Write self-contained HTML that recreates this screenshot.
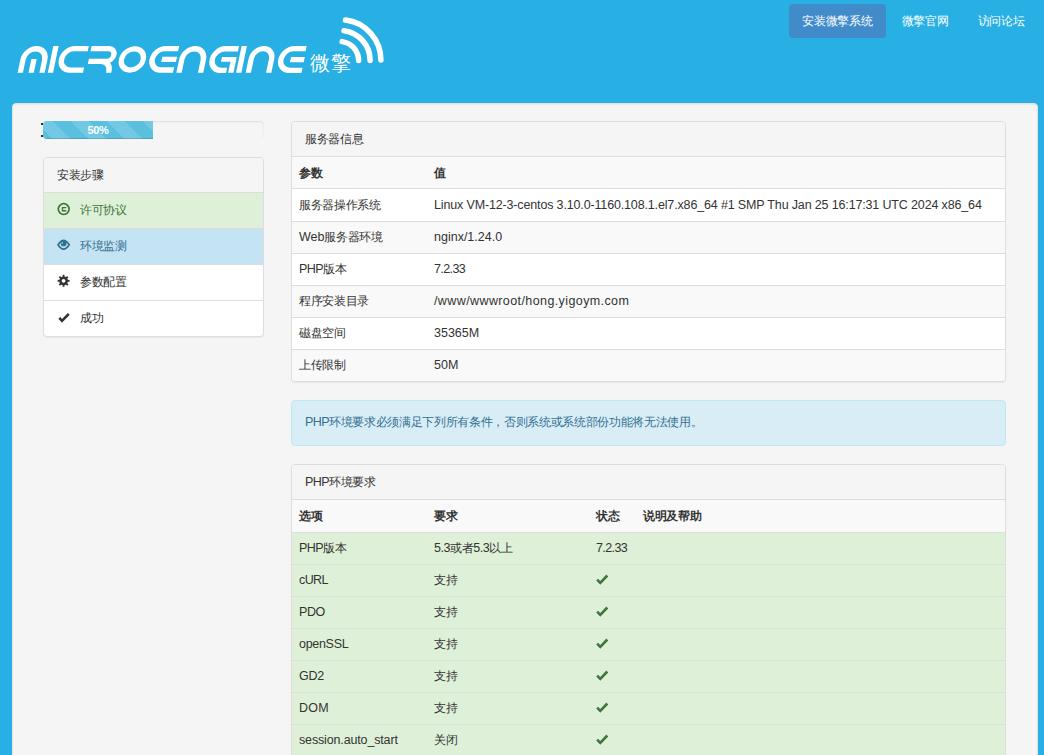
<!DOCTYPE html>
<html><head><meta charset="utf-8">
<style>
*{box-sizing:border-box;}
html,body{margin:0;padding:0;}
body{width:1044px;height:755px;overflow:hidden;position:relative;background:#28b0e4;font-family:"Liberation Sans",sans-serif;font-size:11.7px;color:#333;font-weight:500;letter-spacing:-0.33px;}
.abs{position:absolute;}
.pill{position:absolute;top:4px;height:34px;line-height:34px;color:#fff;text-align:center;border-radius:4px;font-size:11.7px;}
.pill.active{background:#428bca;}
.well{position:absolute;left:12px;top:103px;width:1026px;height:700px;background:#f5f5f5;border:1px solid #e3e3e3;border-radius:4px;box-shadow:inset 0 1px 1px rgba(0,0,0,.05);}
.progress{position:absolute;left:43px;top:121px;width:221px;height:18px;background:#f5f5f5;border-radius:4px;box-shadow:inset 0 1px 2px rgba(0,0,0,.1);overflow:hidden;}
.bar{position:absolute;left:0;top:0;height:18px;width:110px;background-color:#5bc0de;background-image:linear-gradient(45deg,rgba(255,255,255,.15) 25%,transparent 25%,transparent 50%,rgba(255,255,255,.15) 50%,rgba(255,255,255,.15) 75%,transparent 75%,transparent);background-size:36px 36px;background-position:-9px 0;color:#fff;text-align:center;line-height:18px;font-size:11px;font-weight:bold;box-shadow:inset 0 -1px 0 rgba(0,0,0,.15);}
.panel{position:absolute;background:#fff;border:1px solid #ddd;border-radius:4px;box-shadow:0 1px 1px rgba(0,0,0,.05);overflow:hidden;}
.ph{background:#f5f5f5;border-bottom:1px solid #ddd;height:35px;line-height:34px;padding-left:13px;}
.li{position:relative;height:36px;line-height:33px;border-bottom:1px solid #ddd;padding-left:36px;}
.li:last-child{border-bottom:0;}
.li .ic{position:absolute;left:13px;top:11px;width:13px;height:13px;}
.row{position:relative;height:32px;line-height:31px;border-bottom:1px solid #ddd;white-space:nowrap;}
.row:last-child{border-bottom:0;}
.row span{position:absolute;top:-1px;}
.odd{background:#f9f9f9;}
.l{font-style:normal;font-size:12.5px;letter-spacing:0;}
.succ{background:#dff0d8;}
.th{font-weight:bold;}
.th span,.r1 span{top:0 !important;}
.alert{position:absolute;left:291px;top:400px;width:715px;height:46px;background:#d9edf7;border:1px solid #bce8f1;border-radius:4px;color:#31708f;line-height:41px;padding-left:13px;}
</style></head>
<body>
<!-- logo -->
<svg class="abs" style="left:0;top:0" width="400" height="100" viewBox="0 0 400 100">
<g fill="none" stroke="#fff" stroke-width="5.3" transform="translate(0 72.65) skewX(-11.9) translate(0 -72.65)">
<path d="M20.25,72.65V59.65A10.9,10.9 0 0 1 42.05,59.65V72.65M31.15,72.65V59"/>
<path d="M50.4,72.65V46.1"/>
<path d="M83.2,48.7H69.375A10.675,10.675 0 0 0 69.375,70.05H83"/>
<path d="M86,48.7H103.8A6.325,6.325 0 0 1 103.8,61.35H86M96,61.35H99A9.6,9.6 0 0 1 108.6,70.95V72.65"/>
<ellipse cx="129.6" cy="59.45" rx="10.9" ry="10.6" stroke-width="5.2"/>
<path d="M173.6,48.7H160A10.65,10.65 0 0 0 160,70H173M159,59.35H173.7"/>
<path d="M179,72.65V59.55A10.8,10.8 0 0 1 200.6,59.55V72.65"/>
<path d="M233.4,48.75H220A10.83,10.83 0 0 0 220,70.4H226.1"/><path d="M218.7,59.45H233.4" stroke-width="4.7"/><path d="M230.8,72.65V59.45"/>
<path d="M238.7,72.65V46.1"/>
<path d="M248.3,72.65V58.9A10.2,10.2 0 0 1 268.7,58.9V72.65"/>
<path d="M301,48.65H289A10.875,10.875 0 0 0 289,70.4H301.5M287.7,59.55H301.5"/>
</g>
<g fill="none" stroke="#fff" stroke-width="5.5" stroke-linecap="round">
<path d="M342.2,41.6A19.2,19.2 0 0 1 358.6,60.6"/>
<path d="M344,30.7A29.9,29.9 0 0 1 370.1,60.4"/>
<path d="M345.5,20.1A40.2,40.2 0 0 1 380.9,60"/>
</g>
<text x="309.5" y="70" fill="#fff" font-size="20" font-weight="200" letter-spacing="1" font-family="Liberation Sans">微擎</text>
</svg>

<div class="pill active" style="left:789px;width:97px;">安装微擎系统</div>
<div class="pill" style="left:888px;width:74px;">微擎官网</div>
<div class="pill" style="left:964px;width:74px;">访问论坛</div>

<div class="well"></div>

<div class="progress"><div class="bar">50%</div></div>

<div class="panel" style="left:43px;top:157px;width:221px;height:180px;">
  <div class="ph">安装步骤</div>
  <div class="li succ" style="color:#3c763d">许可协议</div>
  <div class="li" style="background:#c4e3f3;color:#31708f">环境监测</div>
  <div class="li">参数配置</div>
  <div class="li">成功</div>
</div>

<div class="panel" style="left:291px;top:121px;width:715px;height:261px;">
  <div class="ph">服务器信息</div>
  <div class="row odd th"><span style="left:7px">参数</span><span style="left:142px">值</span></div>
  <div class="row r1" style="height:33px"><span style="left:7px">服务器操作系统</span><span style="left:142px"><i class="l" style="letter-spacing:-0.15px">Linux VM-12-3-centos 3.10.0-1160.108.1.el7.x86_64 #1 SMP Thu Jan 25 16:17:31 UTC 2024 x86_64</i></span></div>
  <div class="row odd"><span style="left:7px"><i class="l">Web</i>服务器环境</span><span style="left:142px"><i class="l">nginx/1.24.0</i></span></div>
  <div class="row"><span style="left:7px"><i class="l" style="letter-spacing:-0.6px">PHP</i>版本</span><span style="left:142px"><i class="l" style="letter-spacing:-0.6px">7.2.33</i></span></div>
  <div class="row odd"><span style="left:7px">程序安装目录</span><span style="left:142px"><i class="l" style="letter-spacing:0.4px">/www/wwwroot/hong.yigoym.com</i></span></div>
  <div class="row"><span style="left:7px">磁盘空间</span><span style="left:142px"><i class="l">35365M</i></span></div>
  <div class="row odd"><span style="left:7px">上传限制</span><span style="left:142px"><i class="l">50M</i></span></div>
</div>

<div class="alert"><i class="l" style="letter-spacing:-0.6px">PHP</i>环境要求必须满足下列所有条件，否则系统或系统部份功能将无法使用。</div>

<div class="panel" style="left:291px;top:464px;width:715px;height:400px;">
  <div class="ph"><i class="l" style="letter-spacing:-0.6px">PHP</i>环境要求</div>
  <div class="row odd th" style="height:33px"><span style="left:7px">选项</span><span style="left:142px">要求</span><span style="left:304px">状态</span><span style="left:351px">说明及帮助</span></div>
  <div class="row succ"><span style="left:7px"><i class="l" style="letter-spacing:-0.6px">PHP</i>版本</span><span style="left:142px"><i class="l" style="letter-spacing:-0.5px">5.3</i>或者<i class="l" style="letter-spacing:-0.5px">5.3</i>以上</span><span style="left:304px"><i class="l" style="letter-spacing:-0.6px">7.2.33</i></span></div>
  <div class="row succ"><span style="left:7px"><i class="l" style="letter-spacing:-0.6px">cURL</i></span><span style="left:142px">支持</span></div>
  <div class="row succ"><span style="left:7px"><i class="l" style="letter-spacing:-0.4px">PDO</i></span><span style="left:142px">支持</span></div>
  <div class="row succ"><span style="left:7px"><i class="l" style="letter-spacing:-0.3px">openSSL</i></span><span style="left:142px">支持</span></div>
  <div class="row succ"><span style="left:7px"><i class="l" style="letter-spacing:-0.2px">GD2</i></span><span style="left:142px">支持</span></div>
  <div class="row succ"><span style="left:7px"><i class="l" style="letter-spacing:0.2px">DOM</i></span><span style="left:142px">支持</span></div>
  <div class="row succ"><span style="left:7px"><i class="l" style="letter-spacing:-0.15px">session.auto_start</i></span><span style="left:142px">关闭</span></div>
</div>
<svg class="abs" style="left:0;top:0;pointer-events:none" width="1044" height="755" viewBox="0 0 1044 755">
<g fill="none" stroke="#3c763d">
<circle cx="63.7" cy="209.1" r="5.4" stroke-width="1.7"/>
<path d="M66.3,207.6H62.5V210.7H66.3" stroke-width="1.35"/>
</g>
<g fill="#31708f">
<path d="M57,244.8C59.5,241 61.5,239.6 63.6,239.6C65.7,239.6 67.7,241 70.2,244.8C67.7,248.6 65.7,250 63.6,250C61.5,250 59.5,248.6 57,244.8ZM59,244.8C60.8,247.3 62.2,248.3 63.6,248.3C65,248.3 66.4,247.3 68.2,244.8C66.4,242.3 65,241.3 63.6,241.3C62.2,241.3 60.8,242.3 59,244.8Z" fill-rule="evenodd"/>
<circle cx="63.6" cy="243.4" r="2.9"/>
</g>
<circle cx="62.3" cy="243" r="0.8" fill="#c4e3f3"/>
<g fill="#333" transform="translate(63.6 280.8)">
<circle r="4.4"/>
<rect x="-0.9" y="-6" width="1.8" height="12"/>
<rect x="-0.9" y="-6" width="1.8" height="12" transform="rotate(45)"/>
<rect x="-0.9" y="-6" width="1.8" height="12" transform="rotate(90)"/>
<rect x="-0.9" y="-6" width="1.8" height="12" transform="rotate(135)"/>
<circle r="1.9" fill="#fff"/>
</g>
<path d="M59.3,317.9L62,320.8L68.8,313.8" fill="none" stroke="#333" stroke-width="2.6"/>
<g fill="none" stroke="#3c763d" stroke-width="2.6">
<path d="M597.15,579.6L600.3,582.9L607.3,575.5"/>
<path d="M597.15,611.6L600.3,614.9L607.3,607.5"/>
<path d="M597.15,643.6L600.3,646.9L607.3,639.5"/>
<path d="M597.15,675.6L600.3,678.9L607.3,671.5"/>
<path d="M597.15,707.6L600.3,710.9L607.3,703.5"/>
<path d="M597.15,739.6L600.3,742.9L607.3,735.5"/>
</g>
<circle cx="42" cy="124" r="1.1" fill="#000"/>
<circle cx="42" cy="136" r="1.1" fill="#000"/>
</svg>
</body></html>
